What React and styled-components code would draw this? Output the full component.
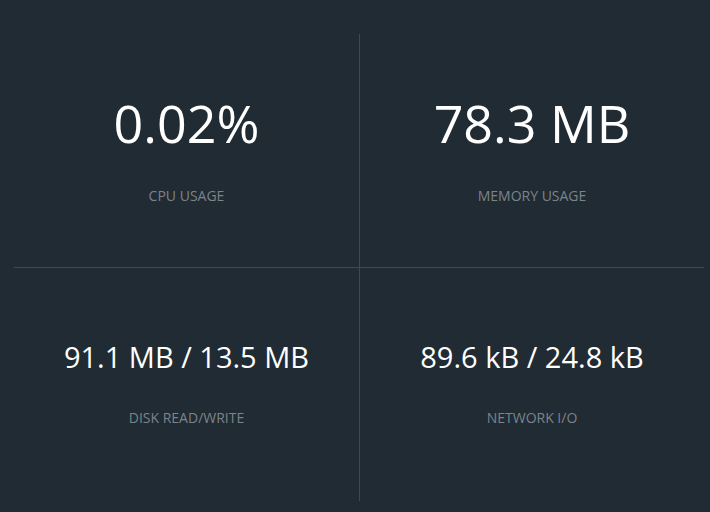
import React from 'react';
import styled, { createGlobalStyle } from 'styled-components';

const GlobalStyle = createGlobalStyle`
  html, body {
    margin: 0;
    padding: 0;
    background: #202b33;
    font-family: "Open Sans", "Liberation Sans", sans-serif;
  }
`;

const Page = styled.div`
  width: 710px;
  height: 512px;
  box-sizing: border-box;
  padding: 34px 6px 11px 14px;
  background: #202b33;
`;

const Grid = styled.div`
  display: grid;
  grid-template-columns: 346px 344px;
  grid-template-rows: 234px 233px;
  height: 467px;
`;

const Cell = styled.div`
  display: flex;
  flex-direction: column;
  align-items: center;
  justify-content: center;
  border-right: ${p => (p.$right ? '1px solid #3d4a53' : 'none')};
  border-bottom: ${p => (p.$bottom ? '1px solid #3d4a53' : 'none')};
`;

const Value = styled.div`
  color: #ffffff;
  font-size: ${p => (p.$large ? '52px' : '29px')};
  line-height: 1.2;
  font-weight: 400;
  margin-top: ${p => (p.$large ? '-4px' : '-2px')};
`;

const Label = styled.div`
  color: #7b848b;
  font-size: 14px;
  text-transform: uppercase;
  margin-top: ${p => (p.$large ? '32px' : '34px')};
`;

const stats = [
  { value: '0.02%', label: 'CPU Usage', large: true },
  { value: '78.3 MB', label: 'Memory Usage', large: true },
  { value: '91.1 MB / 13.5 MB', label: 'Disk Read/Write' },
  { value: '89.6 kB / 24.8 kB', label: 'Network I/O' },
];

export default function App() {
  return (
    <>
      <GlobalStyle />
      <Page>
        <Grid>
          {stats.map((s, i) => (
            <Cell key={s.label} $right={i % 2 === 0} $bottom={i < 2}>
              <Value $large={s.large}>{s.value}</Value>
              <Label $large={s.large}>{s.label}</Label>
            </Cell>
          ))}
        </Grid>
      </Page>
    </>
  );
}
